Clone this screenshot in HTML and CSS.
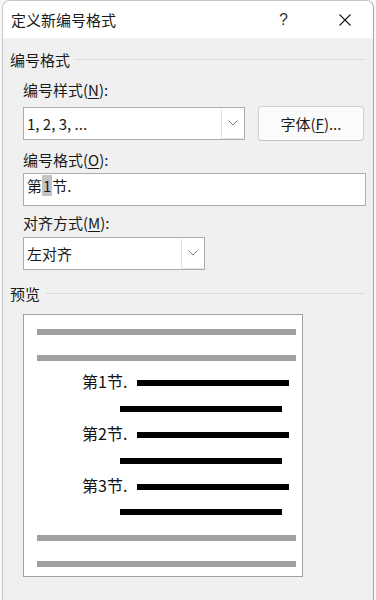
FILE: index.html
```html
<!DOCTYPE html>
<html lang="zh-CN">
<head>
    <meta charset="UTF-8">
    <meta name="viewport" content="width=device-width, initial-scale=1.0">
    <title>定义新编号格式</title>
    <link rel="stylesheet" href="styles.css">
</head>
<body>
    <div class="window">
        <!-- 标题栏 -->
        <div class="titlebar">
            <span class="title">定义新编号格式</span>
            <span class="help">?</span>
            <svg class="close" width="12" height="12" viewBox="0 0 12 12">
                <path d="M0.5 0.5 L11.5 11.5 M11.5 0.5 L0.5 11.5" stroke="#1a1a1a" stroke-width="1.1" fill="none"/>
            </svg>
        </div>

        <div class="dialog-body">
            <div class="group-title first">
                <span>编号格式</span>
                <div class="rule"></div>
            </div>

            <div class="field-label">编号样式(<u>N</u>):</div>
            <div class="combo-row">
                <div class="combo style-combo">
                    <span class="combo-text">1, 2, 3, ...</span>
                    <span class="combo-arrow">
                        <svg width="10" height="6" viewBox="0 0 10 6"><path d="M0.5 0.5 L5 5 L9.5 0.5" stroke="#7a7a7a" fill="none"/></svg>
                    </span>
                </div>
                <div class="btn">字体(<u>F</u>)...</div>
            </div>

            <div class="field-label second">编号格式(<u>O</u>):</div>
            <div class="textbox">第<span class="sel">1</span>节.</div>

            <div class="field-label third">对齐方式(<u>M</u>):</div>
            <div class="combo align-combo">
                <span class="combo-text">左对齐</span>
                <span class="combo-arrow">
                    <svg width="10" height="6" viewBox="0 0 10 6"><path d="M0.5 0.5 L5 5 L9.5 0.5" stroke="#7a7a7a" fill="none"/></svg>
                </span>
            </div>

            <div class="group-title preview-title">
                <span>预览</span>
                <div class="rule"></div>
            </div>

            <!-- 预览框 -->
            <div class="preview">
                <div class="row"><div class="bar gray"></div></div>
                <div class="row"><div class="bar gray"></div></div>
                <div class="row"><span class="num">第1节.</span><div class="bar main"></div></div>
                <div class="row"><div class="bar sub"></div></div>
                <div class="row"><span class="num">第2节.</span><div class="bar main"></div></div>
                <div class="row"><div class="bar sub"></div></div>
                <div class="row"><span class="num">第3节.</span><div class="bar main"></div></div>
                <div class="row"><div class="bar sub"></div></div>
                <div class="row"><div class="bar gray"></div></div>
                <div class="row"><div class="bar gray"></div></div>
            </div>
        </div>
    </div>
</body>
</html>
```

FILE: styles.css
```css
/* 기본 리셋 */
* {
    margin: 0;
    padding: 0;
    box-sizing: border-box;
}

body {
    font-family: "Noto Sans CJK SC", "Noto Sans", sans-serif;
    font-size: 15px;
    line-height: 20px;
    color: #1a1a1a;
    background: #f7f7f7;
    overflow: hidden;
}

/* 창 */
.window {
    margin-left: 2px;
    width: 372px;
    height: 620px;
    background: #f0f0f0;
    border: 1px solid #c6c6c6;
    border-right-color: #a9a9a9;
    border-radius: 8px 8px 0 0;
    overflow: hidden;
}

.titlebar {
    height: 37px;
    background: #fff;
    display: flex;
    align-items: center;
    padding-left: 8px;
}

.title {
    flex: 1;
    padding-top: 1px;
}

.help {
    font-family: "Liberation Sans", sans-serif;
    font-size: 16px;
    color: #333;
    margin-right: 51px;
    padding-top: 1px;
}

.close {
    margin-right: 22px;
    margin-top: 1px;
}

.dialog-body {
    padding: 0 7px 0 20px;
}

/* 그룹 제목 + 구분선 */
.group-title {
    display: flex;
    align-items: center;
    margin-left: -13px;
    margin-right: 1px;
}

.group-title.first {
    margin-top: 12px;
}

.group-title .rule {
    flex: 1;
    height: 1px;
    background: #dadada;
    margin-left: 5px;
    margin-top: -2px;
}

.preview-title {
    margin-top: 14px;
}

.preview-title .rule {
    margin-left: 6px;
}

.field-label {
    margin-top: 10px;
}

.field-label.second {
    margin-top: 9px;
}

.field-label.third {
    margin-top: 7px;
}

u {
    text-decoration-thickness: 1px;
    text-underline-offset: 2px;
}

/* 콤보박스 */
.combo-row {
    display: flex;
    align-items: center;
    margin-top: 6px;
    height: 35px;
}

.combo {
    display: flex;
    align-items: stretch;
    background: #fff;
    border: 1px solid #acacac;
    height: 33px;
}

.style-combo {
    width: 222px;
}

.align-combo {
    width: 182px;
    margin-top: 4px;
}

.combo-text {
    flex: 1;
    padding-left: 3px;
    display: flex;
    align-items: center;
    padding-top: 1px;
}

.combo-arrow {
    width: 22px;
    border-left: 1px solid #e2e2e2;
    border-bottom: 1px solid #e6e6e6;
    margin: 1px 1px 0 0;
    display: flex;
    align-items: center;
    justify-content: center;
    padding-bottom: 2px;
}

.btn {
    margin-left: 13px;
    width: 106px;
    height: 35px;
    background: #fbfbfb;
    border: 1px solid #d0d0d0;
    border-bottom-color: #c2c2c2;
    border-radius: 4px;
    display: flex;
    align-items: center;
    justify-content: center;
}

/* 텍스트 박스 */
.textbox {
    margin-top: 3px;
    width: 343px;
    height: 33px;
    background: #fff;
    border: 1px solid #acacac;
    padding: 1px 0 0 3px;
    line-height: 20px;
}

.sel {
    display: inline-block;
    background: #c4c4c4;
    line-height: 21px;
    padding: 0 1px;
}

/* 미리보기 */
.preview {
    margin-top: 10px;
    width: 280px;
    height: 263px;
    background: #fff;
    border: 1px solid #a0a0a0;
    padding-top: 4px;
}

.row {
    height: 25.8px;
    display: flex;
    align-items: center;
}

.bar {
    height: 6px;
}

.bar.gray {
    background: #a0a0a0;
    width: 259px;
    margin-left: 13px;
}

.bar.main {
    background: #000;
    width: 152px;
}

.bar.sub {
    background: #000;
    width: 162px;
    margin-left: 96px;
}

.num {
    width: 113px;
    padding-left: 58px;
    font-size: 16px;
    color: #111;
    padding-bottom: 4px;
    white-space: nowrap;
}
```
